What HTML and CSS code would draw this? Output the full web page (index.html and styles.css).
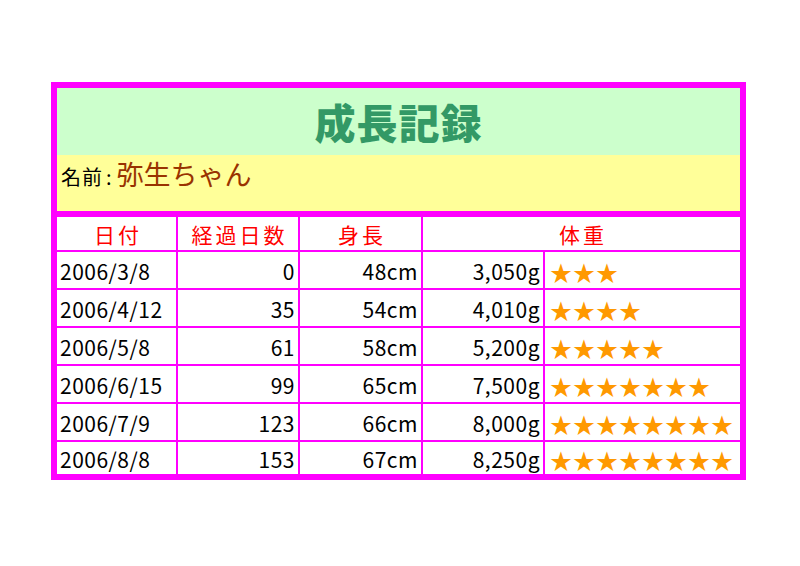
FILE: index.html
```html
<!DOCTYPE html>
<html lang="ja">
<head>
<meta charset="utf-8">
<title>成長記録</title>
<link rel="stylesheet" href="styles.css">
</head>
<body>
<div class="sheet">
  <div class="record">
    <div class="title">成長記録</div>
    <div class="name-row"><span class="name-label">名前</span><span class="colon">:</span><span class="name">弥生ちゃん</span></div>
    <div class="grid">
      <div class="cell head">日付</div>
      <div class="cell head">経過日数</div>
      <div class="cell head">身長</div>
      <div class="cell head span2">体重</div>

      <div class="cell">2006/3/8</div>
      <div class="cell num">0</div>
      <div class="cell num">48cm</div>
      <div class="cell num">3,050g</div>
      <div class="cell stars">★★★</div>

      <div class="cell">2006/4/12</div>
      <div class="cell num">35</div>
      <div class="cell num">54cm</div>
      <div class="cell num">4,010g</div>
      <div class="cell stars">★★★★</div>

      <div class="cell">2006/5/8</div>
      <div class="cell num">61</div>
      <div class="cell num">58cm</div>
      <div class="cell num">5,200g</div>
      <div class="cell stars">★★★★★</div>

      <div class="cell">2006/6/15</div>
      <div class="cell num">99</div>
      <div class="cell num">65cm</div>
      <div class="cell num">7,500g</div>
      <div class="cell stars">★★★★★★★</div>

      <div class="cell">2006/7/9</div>
      <div class="cell num">123</div>
      <div class="cell num">66cm</div>
      <div class="cell num">8,000g</div>
      <div class="cell stars">★★★★★★★★</div>

      <div class="cell">2006/8/8</div>
      <div class="cell num">153</div>
      <div class="cell num">67cm</div>
      <div class="cell num">8,250g</div>
      <div class="cell stars">★★★★★★★★</div>
    </div>
  </div>
</div>
</body>
</html>
```
FILE: styles.css
```css
html, body {
  margin: 0;
  padding: 0;
  background: #ffffff;
}
body {
  font-family: "Noto Sans CJK JP", "Noto Sans", sans-serif;
  color: #000;
}
.sheet {
  padding: 82px 0 0 51px;
}
.record {
  width: 683px;
  border: 6px solid #ff00ff;
  background: #ff00ff;
}
.title {
  height: 67px;
  background: #ccffcc;
  color: #339966;
  font-size: 41px;
  font-weight: 900;
  line-height: 67px;
  text-align: center;
  letter-spacing: 1px;
}
.name-row {
  height: 56px;
  background: #ffff99;
  box-sizing: border-box;
  padding: 1px 0 0 4px;
  display: flex;
  align-items: baseline;
  line-height: 36px;
}
.name-label {
  font-size: 20px;
  letter-spacing: 1px;
}
.colon {
  font-size: 20px;
  margin: 0 5px 0 3px;
}
.name {
  font-size: 27px;
  color: #993300;
}
.grid {
  margin-top: 6px;
  display: grid;
  grid-template-columns: 119px 120px 121px 120px 195px;
  grid-template-rows: 33px repeat(5, 36px) 32px;
  gap: 2px;
  background: #ff00ff;
}
.cell {
  background: #fff;
  font-size: 21px;
  letter-spacing: 0.5px;
  display: flex;
  align-items: center;
  padding: 1px 3px 0 3px;
  white-space: nowrap;
  overflow: hidden;
}
.head {
  color: #ff0000;
  justify-content: center;
  padding: 0 0 0 3px;
  letter-spacing: 3px;
}
.span2 {
  grid-column: span 2;
}
.num {
  justify-content: flex-end;
  padding-right: 3px;
}
.stars {
  color: #ff9900;
  font-size: 22px;
  padding-left: 5px;
  letter-spacing: 1px;
}
```
